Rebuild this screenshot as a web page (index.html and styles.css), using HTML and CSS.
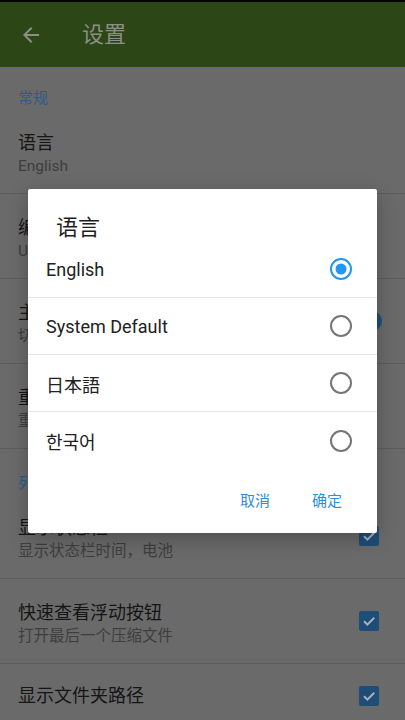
FILE: index.html
```html
<!DOCTYPE html>
<html lang="zh-CN">
<head>
<meta charset="utf-8">
<title>设置</title>
<link rel="stylesheet" href="styles.css">
</head>
<body>
<div class="screen">
  <div class="status"></div>
  <header class="appbar">
    <svg class="back" viewBox="0 0 24 24" width="24" height="24"><path d="M20 11H7.83l5.59-5.59L12 4l-8 8 8 8 1.41-1.41L7.83 13H20v-2z"/></svg>
    <span class="appbar-title">设置</span>
  </header>

  <div class="cat cat-first">常规</div>
  <div class="item">
    <div class="item-text"><div class="item-title">语言</div><div class="item-sub">English</div></div>
  </div>
  <div class="item">
    <div class="item-text"><div class="item-title">编码</div><div class="item-sub">UTF-8</div></div>
  </div>
  <div class="item">
    <div class="item-text"><div class="item-title">主题</div><div class="item-sub">切换</div></div>
    <div class="switch"><span class="track"></span><span class="thumb"></span></div>
  </div>
  <div class="item">
    <div class="item-text"><div class="item-title">重置</div><div class="item-sub">重置</div></div>
  </div>

  <div class="cat cat-next">列表</div>
  <div class="item">
    <div class="item-text"><div class="item-title">显示状态栏</div><div class="item-sub">显示状态栏时间，电池</div></div>
    <div class="checkbox"><svg viewBox="0 0 20 20" width="20" height="20"><path d="M5 10.3l3.4 3.4 6.8-7"/></svg></div>
  </div>
  <div class="item">
    <div class="item-text"><div class="item-title">快速查看浮动按钮</div><div class="item-sub">打开最后一个压缩文件</div></div>
    <div class="checkbox"><svg viewBox="0 0 20 20" width="20" height="20"><path d="M5 10.3l3.4 3.4 6.8-7"/></svg></div>
  </div>
  <div class="item item-single">
    <div class="item-text"><div class="item-title">显示文件夹路径</div></div>
    <div class="checkbox"><svg viewBox="0 0 20 20" width="20" height="20"><path d="M5 10.3l3.4 3.4 6.8-7"/></svg></div>
  </div>

  <div class="dialog">
    <div class="dialog-title">语言</div>
    <div class="options">
      <div class="option"><span class="opt-label">English</span>
        <svg class="radio on" viewBox="0 0 22 22" width="22" height="22"><circle cx="11" cy="11" r="10"/><circle class="dot" cx="11" cy="11" r="5.5"/></svg></div>
      <div class="option"><span class="opt-label">System Default</span>
        <svg class="radio" viewBox="0 0 22 22" width="22" height="22"><circle cx="11" cy="11" r="10"/></svg></div>
      <div class="option"><span class="opt-label ja" lang="ja">日本語</span>
        <svg class="radio" viewBox="0 0 22 22" width="22" height="22"><circle cx="11" cy="11" r="10"/></svg></div>
      <div class="option"><span class="opt-label ko" lang="ko">한국어</span>
        <svg class="radio" viewBox="0 0 22 22" width="22" height="22"><circle cx="11" cy="11" r="10"/></svg></div>
    </div>
    <div class="actions">
      <span class="btn">取消</span>
      <span class="btn">确定</span>
    </div>
  </div>
</div>
</body>
</html>
```
FILE: styles.css
```css
* { box-sizing: border-box; }
html, body { margin: 0; padding: 0; }
body {
  width: 405px;
  height: 720px;
  overflow: hidden;
  font-family: Roboto, "Noto Sans CJK SC", sans-serif;
  background: #6a6a6a;
}
.screen {
  position: relative;
  width: 405px;
  height: 720px;
  overflow: hidden;
  display: flex;
  flex-direction: column;
  background: #6a6a6a;
}
.status { height: 2px; background: #050505; flex: none; }
.appbar {
  height: 65px;
  flex: none;
  background: #2c4616;
  display: flex;
  align-items: center;
  padding-left: 19px;
  gap: 39px;
}
.back { fill: #8b8f88; display: block; }
.appbar-title {
  font-size: 22px;
  color: #8b8f88;
  line-height: 26px;
}
.cat {
  flex: none;
  padding: 20px 18px 0;
  font-size: 15px;
  line-height: 22px;
  color: #2c5d8a;
}
.cat-first { height: 42px; }
.cat-next { height: 45px; padding-top: 23px; }
.item {
  flex: none;
  height: 85px;
  display: flex;
  align-items: flex-start;
  padding: 22px 26px 0 18px;
  border-bottom: 1px solid #5d5d5d;
}
.item-text { flex: 1; }
.item-title {
  font-size: 18px;
  line-height: 24px;
  color: #151515;
}
.item-sub {
  font-size: 15.5px;
  line-height: 22px;
  color: #3e3e3e;
}
.item-single {
  height: 64px;
  border-bottom: none;
  align-items: center;
  padding-top: 0;
}
.checkbox {
  align-self: center;
  margin-top: -22px;
  width: 20px;
  height: 20px;
  border-radius: 2px;
  background: #1e4d78;
  flex: none;
}
.item-single .checkbox { margin-top: 0; }
.checkbox svg { display: block; fill: none; stroke: #a7b1bb; stroke-width: 2; }
.switch {
  align-self: center;
  margin-top: -22px;
  position: relative;
  width: 38px;
  height: 20px;
  margin-right: -3px;
  flex: none;
}
.track {
  position: absolute;
  left: 2px; right: 2px; top: 3px;
  height: 14px;
  border-radius: 7px;
  background: #2b4a66;
}
.thumb {
  position: absolute;
  right: 0; top: 0;
  width: 20px; height: 20px;
  border-radius: 50%;
  background: #1d4e7c;
}
.dialog {
  position: absolute;
  left: 28px;
  top: 189px;
  width: 349px;
  background: #ffffff;
  border-radius: 2px;
  box-shadow: 0 6px 20px rgba(0,0,0,0.25);
}
.dialog-title {
  padding: 25px 28px 0;
  height: 52px;
  font-size: 22px;
  line-height: 28px;
  color: #1e1e1e;
}
.option {
  height: 57px;
  display: flex;
  align-items: center;
  justify-content: space-between;
  padding: 0 25px 0 18px;
  border-bottom: 1px solid #e6e6e6;
}
.option:last-child { border-bottom: none; }
.opt-label {
  font-size: 18px;
  color: #212121;
  padding-top: 1px;
}
.opt-label.ja { font-family: Roboto, "Noto Sans CJK JP", sans-serif; }
.opt-label.ko { font-family: Roboto, "Noto Sans CJK KR", sans-serif; }
.radio { display: block; fill: none; stroke: #757575; stroke-width: 2; }
.radio.on { stroke: #2196f3; }
.radio .dot { fill: #2196f3; stroke: none; }
.actions {
  height: 64px;
  display: flex;
  justify-content: flex-end;
  align-items: center;
  gap: 26px;
  padding: 0 27px 0 0;
}
.btn {
  padding: 0 8px;
  line-height: 36px;
  font-size: 15px;
  color: #2d8edb;
}
```
